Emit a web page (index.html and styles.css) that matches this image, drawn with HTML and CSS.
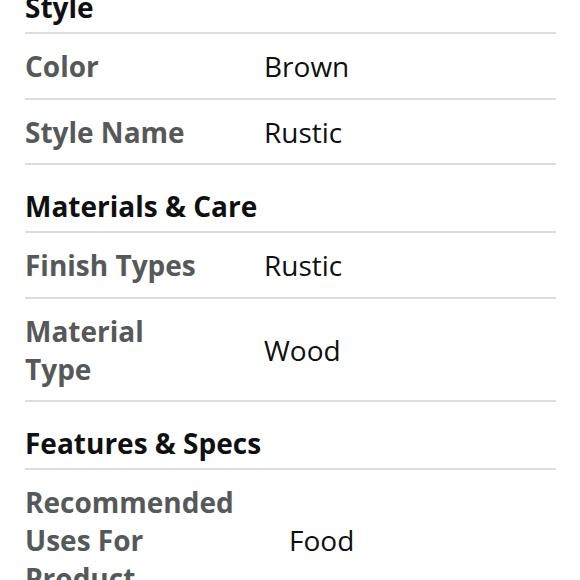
FILE: index.html
```html
<!DOCTYPE html>
<html>
<head>
<meta charset="utf-8">
<link rel="stylesheet" href="styles.css">
</head>
<body>
<div class="page">
  <section class="group">
    <h2 class="group-title">Style</h2>
    <table class="specs">
      <tr><th class="label">Color</th><td class="value">Brown</td></tr>
      <tr><th class="label">Style Name</th><td class="value">Rustic</td></tr>
    </table>
  </section>
  <section class="group">
    <h2 class="group-title">Materials &amp; Care</h2>
    <table class="specs">
      <tr><th class="label">Finish Types</th><td class="value">Rustic</td></tr>
      <tr><th class="label">Material Type</th><td class="value">Wood</td></tr>
    </table>
  </section>
  <section class="group">
    <h2 class="group-title">Features &amp; Specs</h2>
    <table class="specs specs-wide">
      <tr><th class="label">Recommended Uses For Product</th><td class="value">Food</td></tr>
    </table>
  </section>
</div>
</body>
</html>
```
FILE: styles.css
```css
html, body {
  margin: 0;
  padding: 0;
  background: #ffffff;
}
.page {
  margin: -34px 24px 0 25px;
  font-family: "Open Sans", "Noto Sans", sans-serif;
}
.group-title {
  margin: 0;
  padding: 22px 0 6px;
  line-height: 38px;
  font-size: 28px;
  font-weight: 700;
  color: #0f1111;
  border-bottom: 2px solid #dddddd;
}
.specs {
  width: 100%;
  border-collapse: collapse;
  table-layout: fixed;
}
.specs tr {
  border-bottom: 2px solid #dddddd;
}
.label {
  width: 180px;
  text-align: left;
  font-size: 28px;
  font-weight: 700;
  color: #565959;
  line-height: 38px;
  padding: 13px 59px 12.5px 0;
  vertical-align: middle;
}
.specs-wide .label {
  width: 215px;
  padding-right: 49px;
}
.value {
  font-size: 28px;
  font-weight: 400;
  color: #0f1111;
  line-height: 38px;
  padding: 13px 0 12.5px;
  vertical-align: middle;
}
```
